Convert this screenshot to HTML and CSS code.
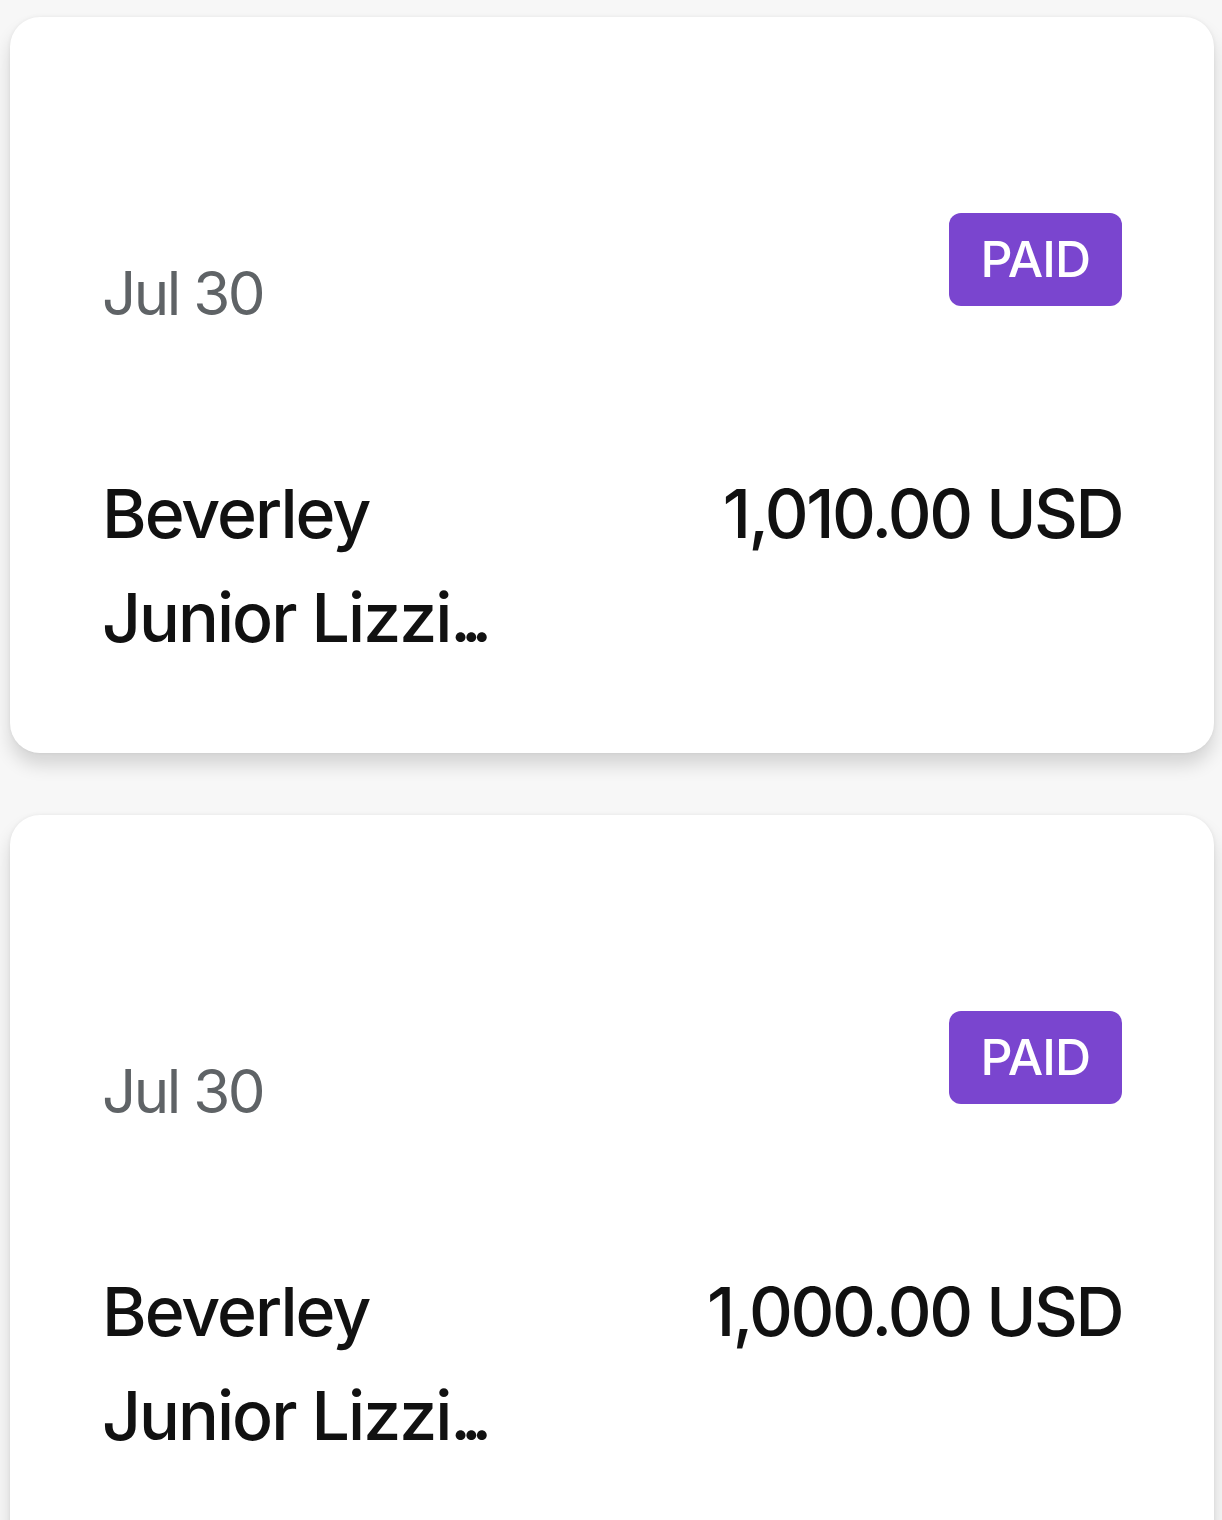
FILE: index.html
```html
<!DOCTYPE html>
<html lang="en">
<head>
    <meta charset="UTF-8">
    <meta name="viewport" content="width=device-width, initial-scale=1.0">
    <title>Payments</title>
    <link rel="stylesheet" href="styles.css">
</head>
<body>
    <div class="payment-list">
        <div class="payment-card">
            <div class="card-top">
                <span class="payment-date">Jul 30</span>
                <span class="status-badge">PAID</span>
            </div>
            <div class="card-bottom">
                <div class="payer-name">Beverley Junior Lizzi<span class="dots">...</span></div>
                <div class="payment-amount">1,010.00 USD</div>
            </div>
        </div>

        <div class="payment-card">
            <div class="card-top">
                <span class="payment-date">Jul 30</span>
                <span class="status-badge">PAID</span>
            </div>
            <div class="card-bottom">
                <div class="payer-name">Beverley Junior Lizzi<span class="dots">...</span></div>
                <div class="payment-amount">1,000.00 USD</div>
            </div>
        </div>
    </div>
</body>
</html>
```

FILE: styles.css
```css
body {
    margin: 0;
    padding: 0;
    background: #f7f7f7;
    font-family: 'Inter', 'Lato', sans-serif;
    overflow: hidden;
}

.payment-list {
    display: flex;
    flex-direction: column;
    gap: 62px;
    padding: 17px 8px 0 10px;
}

.payment-card {
    background: #fff;
    border-radius: 30px;
    padding: 196px 92px 84px 92px;
    box-shadow: 0 12px 18px rgba(0, 0, 0, 0.14), 0 0 4px rgba(0, 0, 0, 0.06);
}

.card-top {
    display: flex;
    justify-content: space-between;
    align-items: flex-start;
}

.payment-date {
    margin-top: 40px;
    color: #5f6366;
    font-size: 60px;
    line-height: 80px;
    letter-spacing: -2.5px;
}

.status-badge {
    background: #7a45cf;
    color: #fff;
    font-size: 50px;
    font-weight: 500;
    line-height: 93px;
    padding: 0 32px;
    border-radius: 12px;
    letter-spacing: -1px;
}

.card-bottom {
    display: flex;
    justify-content: space-between;
    align-items: flex-start;
    margin-top: 128px;
}

.payer-name {
    width: 420px;
    color: #111;
    font-size: 68px;
    font-weight: 500;
    line-height: 104px;
    letter-spacing: -2px;
}

.dots {
    letter-spacing: -10px;
}

.payment-amount {
    color: #111;
    font-size: 68px;
    font-weight: 500;
    line-height: 104px;
    letter-spacing: -2.5px;
}
```
